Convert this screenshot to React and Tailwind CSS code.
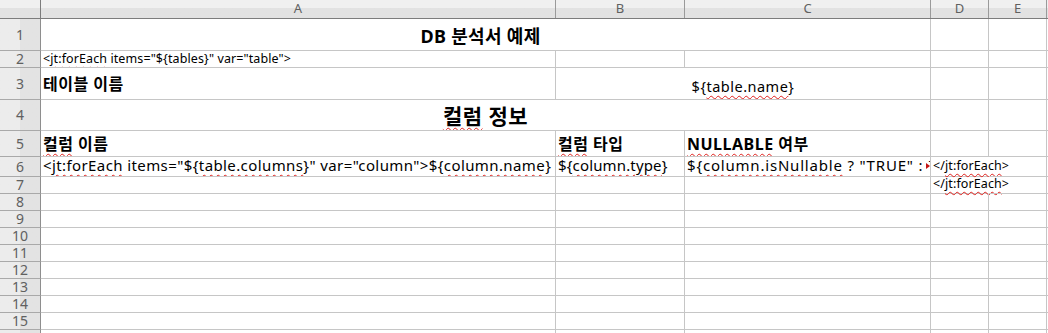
import React from 'react';

const FONT = { fontFamily: '"Noto Sans", "Noto Sans CJK KR", sans-serif' };

// spell-check squiggle like the office app draws
const Sq = ({ children }) => (
  <span className="underline decoration-wavy decoration-[#e0201c] decoration-1 underline-offset-[3px]">
    {children}
  </span>
);

const RowHead = ({ n }) => (
  <div className="w-[41px] shrink-0 border-r border-b border-r-[#8e8e8e] border-b-[#a9a9a9] bg-linear-to-r from-[#ececec] from-50% to-[#e3e3e3] to-50% flex items-center justify-center overflow-hidden text-[14px] leading-none text-[#606060]">
    {n}
  </div>
);

const ColHead = ({ w, label }) => (
  <div className={`${w} shrink-0 border-r border-[#9a9a9a] flex items-center justify-center text-[13px] text-[#606060]`}>
    {label}
  </div>
);

const cellBase = 'shrink-0 border-r border-b border-[#c6c6c6] overflow-hidden whitespace-nowrap flex items-end px-[2px]';
// cell whose text runs over into the next column
const spillCell = 'shrink-0 border-b border-r border-b-[#c6c6c6] border-r-white whitespace-nowrap flex items-end px-[2px] text-[12.5px] tracking-[0.1px] leading-none';

const EmptyRow = ({ n }) => (
  <div className="flex h-[17px]">
    <RowHead n={n} />
    <div className={`w-[515px] ${cellBase}`} />
    <div className={`w-[129px] ${cellBase}`} />
    <div className={`w-[246px] ${cellBase}`} />
    <div className={`w-[58px] ${cellBase}`} />
    <div className={`w-[58px] ${cellBase}`} />
    <div className={`flex-1 ${cellBase}`} />
  </div>
);

export default function App() {
  return (
    <div className="w-[1048px] h-[333px] overflow-hidden bg-white text-black" style={FONT}>
      {/* column header */}
      <div className="flex h-[19px] border-b border-[#7c7c7c] bg-linear-to-b from-[#f0f0f0] from-45% to-[#e2e2e2] to-45%">
        <div className="w-[41px] shrink-0 border-r border-[#7c7c7c]" />
        <ColHead w="w-[515px]" label="A" />
        <ColHead w="w-[129px]" label="B" />
        <ColHead w="w-[246px]" label="C" />
        <ColHead w="w-[58px]" label="D" />
        <ColHead w="w-[58px]" label="E" />
        <div className="flex-1" />
      </div>

      {/* 1 */}
      <div className="flex h-[32px]">
        <RowHead n={1} />
        <div className={`w-[890px] ${cellBase} justify-center pr-[12px] pb-[5px] text-[18px] font-bold tracking-[0.3px] leading-none`}>
          DB 분석서 예제
        </div>
        <div className={`w-[58px] ${cellBase}`} />
        <div className={`w-[58px] ${cellBase}`} />
        <div className={`flex-1 ${cellBase}`} />
      </div>

      {/* 2 */}
      <div className="flex h-[17px]">
        <RowHead n={2} />
        <div className={`w-[515px] ${cellBase} pb-[2px] text-[12.5px] tracking-[0.1px] leading-none`}>
          &lt;<Sq>jt:forEach</Sq>&nbsp;items="${'{'}tables{'}'}" var="table"&gt;
        </div>
        <div className={`w-[129px] ${cellBase}`} />
        <div className={`w-[246px] ${cellBase}`} />
        <div className={`w-[58px] ${cellBase}`} />
        <div className={`w-[58px] ${cellBase}`} />
        <div className={`flex-1 ${cellBase}`} />
      </div>

      {/* 3 */}
      <div className="flex h-[32px]">
        <RowHead n={3} />
        <div className={`w-[515px] ${cellBase} pb-[7px] text-[16px] font-bold tracking-[0.5px] leading-none`}>
          테이블 이름
        </div>
        <div className={`w-[375px] ${cellBase} justify-center pb-[6px] text-[14.5px] tracking-[0.5px] leading-none`}>
          ${'{'}<Sq>table.name</Sq>{'}'}
        </div>
        <div className={`w-[58px] ${cellBase}`} />
        <div className={`w-[58px] ${cellBase}`} />
        <div className={`flex-1 ${cellBase}`} />
      </div>

      {/* 4 */}
      <div className="flex h-[31px]">
        <RowHead n={4} />
        <div className={`w-[890px] ${cellBase} justify-center pb-[3px] text-[21px] font-bold tracking-[0.5px] leading-none`}>
          <Sq>컬럼</Sq>&nbsp;정보
        </div>
        <div className={`w-[58px] ${cellBase}`} />
        <div className={`w-[58px] ${cellBase}`} />
        <div className={`flex-1 ${cellBase}`} />
      </div>

      {/* 5 */}
      <div className="flex h-[26px]">
        <RowHead n={5} />
        <div className={`w-[515px] ${cellBase} pb-[4px] text-[16px] font-bold tracking-[0.5px] leading-none`}>
          <Sq>컬럼</Sq>&nbsp;이름
        </div>
        <div className={`w-[129px] ${cellBase} pb-[4px] text-[16px] font-bold tracking-[0.5px] leading-none`}>
          <Sq>컬럼</Sq>&nbsp;타입
        </div>
        <div className={`w-[246px] ${cellBase} pb-[4px] text-[16px] font-bold tracking-[0.5px] leading-none`}>
          <Sq>NULLABLE</Sq>&nbsp;여부
        </div>
        <div className={`w-[58px] ${cellBase}`} />
        <div className={`w-[58px] ${cellBase}`} />
        <div className={`flex-1 ${cellBase}`} />
      </div>

      {/* 6 */}
      <div className="flex h-[20px]">
        <RowHead n={6} />
        <div className={`w-[515px] ${cellBase} pb-[3px] text-[15px] tracking-[0.4px] leading-none`}>
          &lt;<Sq>jt:forEach</Sq>&nbsp;items="${'{'}<Sq>table.columns</Sq>{'}'}" var="column"&gt;${'{'}<Sq>column.name</Sq>{'}'}
        </div>
        <div className={`w-[129px] ${cellBase} pb-[3px] text-[15px] tracking-[0.15px] leading-none`}>
          ${'{'}<Sq>column.type</Sq>{'}'}
        </div>
        <div className={`relative w-[246px] ${cellBase} pb-[3px] text-[15px] tracking-[0.8px] leading-none`}>
          ${'{'}<Sq>column.isNullable</Sq>&nbsp;? "TRUE" : "FALSE"{'}'}
          <svg className="absolute right-0 top-[5px] bg-white" width="4" height="8" viewBox="0 0 4 8">
            <path d="M0 1 L4 4 L0 7 Z" fill="#c41414" />
          </svg>
        </div>
        <div className={`w-[58px] ${spillCell} pb-[4px]`}>
          &lt;/<Sq>jt:forEach</Sq>&gt;
        </div>
        <div className={`w-[58px] ${cellBase}`} />
        <div className={`flex-1 ${cellBase}`} />
      </div>

      {/* 7 */}
      <div className="flex h-[17px]">
        <RowHead n={7} />
        <div className={`w-[515px] ${cellBase}`} />
        <div className={`w-[129px] ${cellBase}`} />
        <div className={`w-[246px] ${cellBase}`} />
        <div className={`w-[58px] ${spillCell} pb-[3px]`}>
          &lt;/<Sq>jt:forEach</Sq>&gt;
        </div>
        <div className={`w-[58px] ${cellBase}`} />
        <div className={`flex-1 ${cellBase}`} />
      </div>

      {[8, 9, 10, 11, 12, 13, 14, 15, 16].map((n) => (
        <EmptyRow key={n} n={n} />
      ))}
    </div>
  );
}
